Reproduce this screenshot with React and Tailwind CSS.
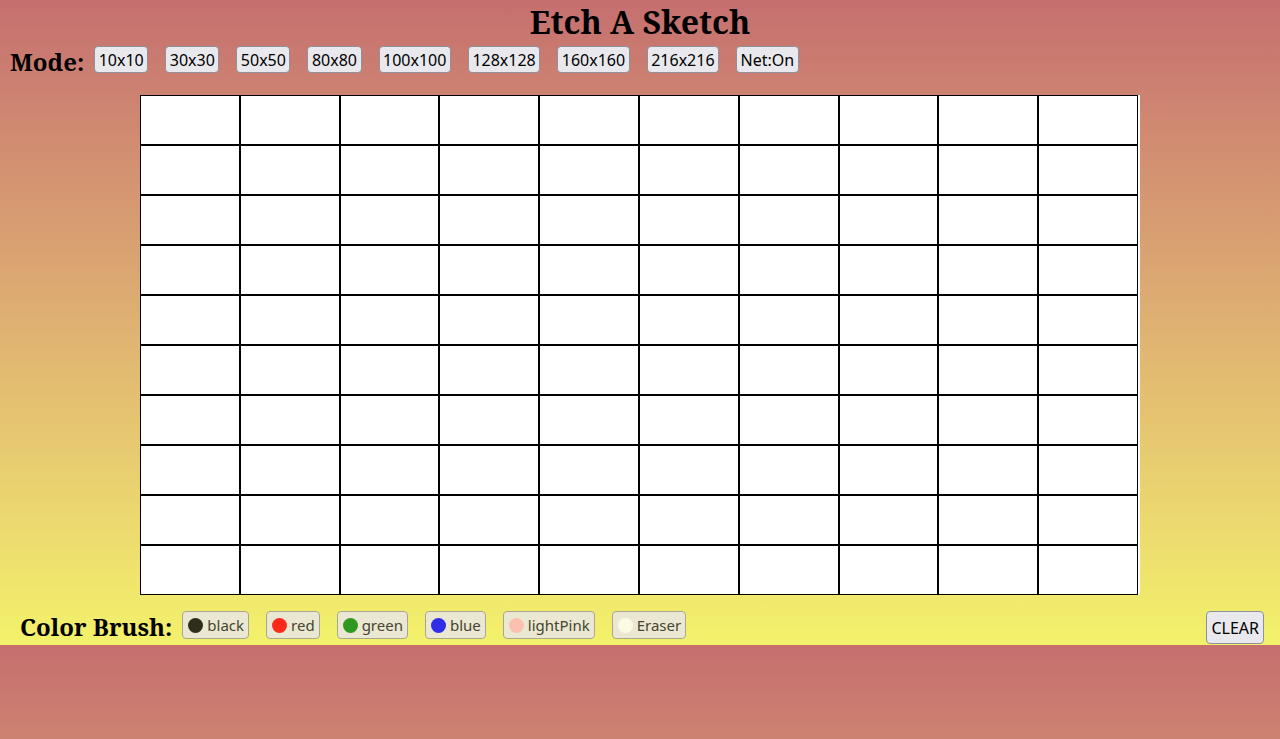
import React from 'react';

const MODES = ['10x10', '30x30', '50x50', '80x80', '100x100', '128x128', '160x160', '216x216', 'Net:On'];

const BRUSHES = [
  { name: 'black', dot: 'bg-[#2f2d1c]' },
  { name: 'red', dot: 'bg-[#fd2a1c]' },
  { name: 'green', dot: 'bg-[#2f991f]' },
  { name: 'blue', dot: 'bg-[#2f2ee6]' },
  { name: 'lightPink', dot: 'bg-[#fcc0b0]' },
  { name: 'Eraser', dot: 'bg-[#fbfbe4]' },
];

const serif = "font-['Noto_Serif','DejaVu_Serif',serif]";
const sans = "font-['Noto_Sans','Open_Sans',sans-serif]";

const App = () => {
  const cells = Array.from({ length: 100 }, (_, i) => i);

  return (
    <div className="min-h-screen flex flex-col">
      <div className="h-[645px] shrink-0 bg-gradient-to-b from-[#c56f6f] to-[#f3f26b] flex flex-col">
        <h1 className={`${serif} text-[32px] font-bold text-center text-black leading-none pt-[6px]`}>
          Etch A Sketch
        </h1>

        {/* Mode row */}
        <div className="flex items-start h-[27px] mt-[8px] pl-[10px]">
          <span className={`${serif} text-[24px] font-bold text-black leading-none mr-[10px] mt-[4px]`}>Mode:</span>
          <div className="flex gap-[17px]">
            {MODES.map((m) => (
              <button
                key={m}
                className={`${sans} h-[27px] px-[3.5px] text-[16px] text-black bg-[#e9e9ed] border border-[#8f8f9d] rounded-[4px] leading-none`}
              >
                {m}
              </button>
            ))}
          </div>
        </div>

        {/* Sketch grid */}
        <div className="w-[1000px] h-[500px] shrink-0 mx-auto mt-[22px] bg-white grid grid-cols-[repeat(10,99.8px)] grid-rows-10">
          {cells.map((c) => (
            <div key={c} className="border border-black" />
          ))}
        </div>

        {/* Brush row */}
        <div className="flex items-start mt-[16px] pl-[20px] pr-[16px]">
          <span className={`${serif} text-[24px] font-bold text-black leading-none mr-[10px] mt-[4px]`}>Color Brush:</span>
          <div className="flex gap-[17px]">
            {BRUSHES.map((b) => (
              <button
                key={b.name}
                className={`${sans} h-[28px] pl-[5px] pr-[4px] flex items-center gap-[4px] text-[15px] text-[#46452f] bg-[#eae8d3] border border-[#a9a78f] rounded-[4px] leading-none`}
              >
                <span className={`w-[15px] h-[15px] rounded-full ${b.dot}`} />
                {b.name}
              </button>
            ))}
          </div>
          <button
            className={`${sans} ml-auto h-[33px] px-[4px] text-[16px] text-black bg-[#e9e9ed] border border-[#8f8f9d] rounded-[4px] leading-none`}
          >
            CLEAR
          </button>
        </div>
      </div>
      <div className="flex-1 bg-gradient-to-b from-[#c56f6f] to-[#f3f26b] bg-[length:100%_645px] bg-no-repeat" />
    </div>
  );
};

export default App;
